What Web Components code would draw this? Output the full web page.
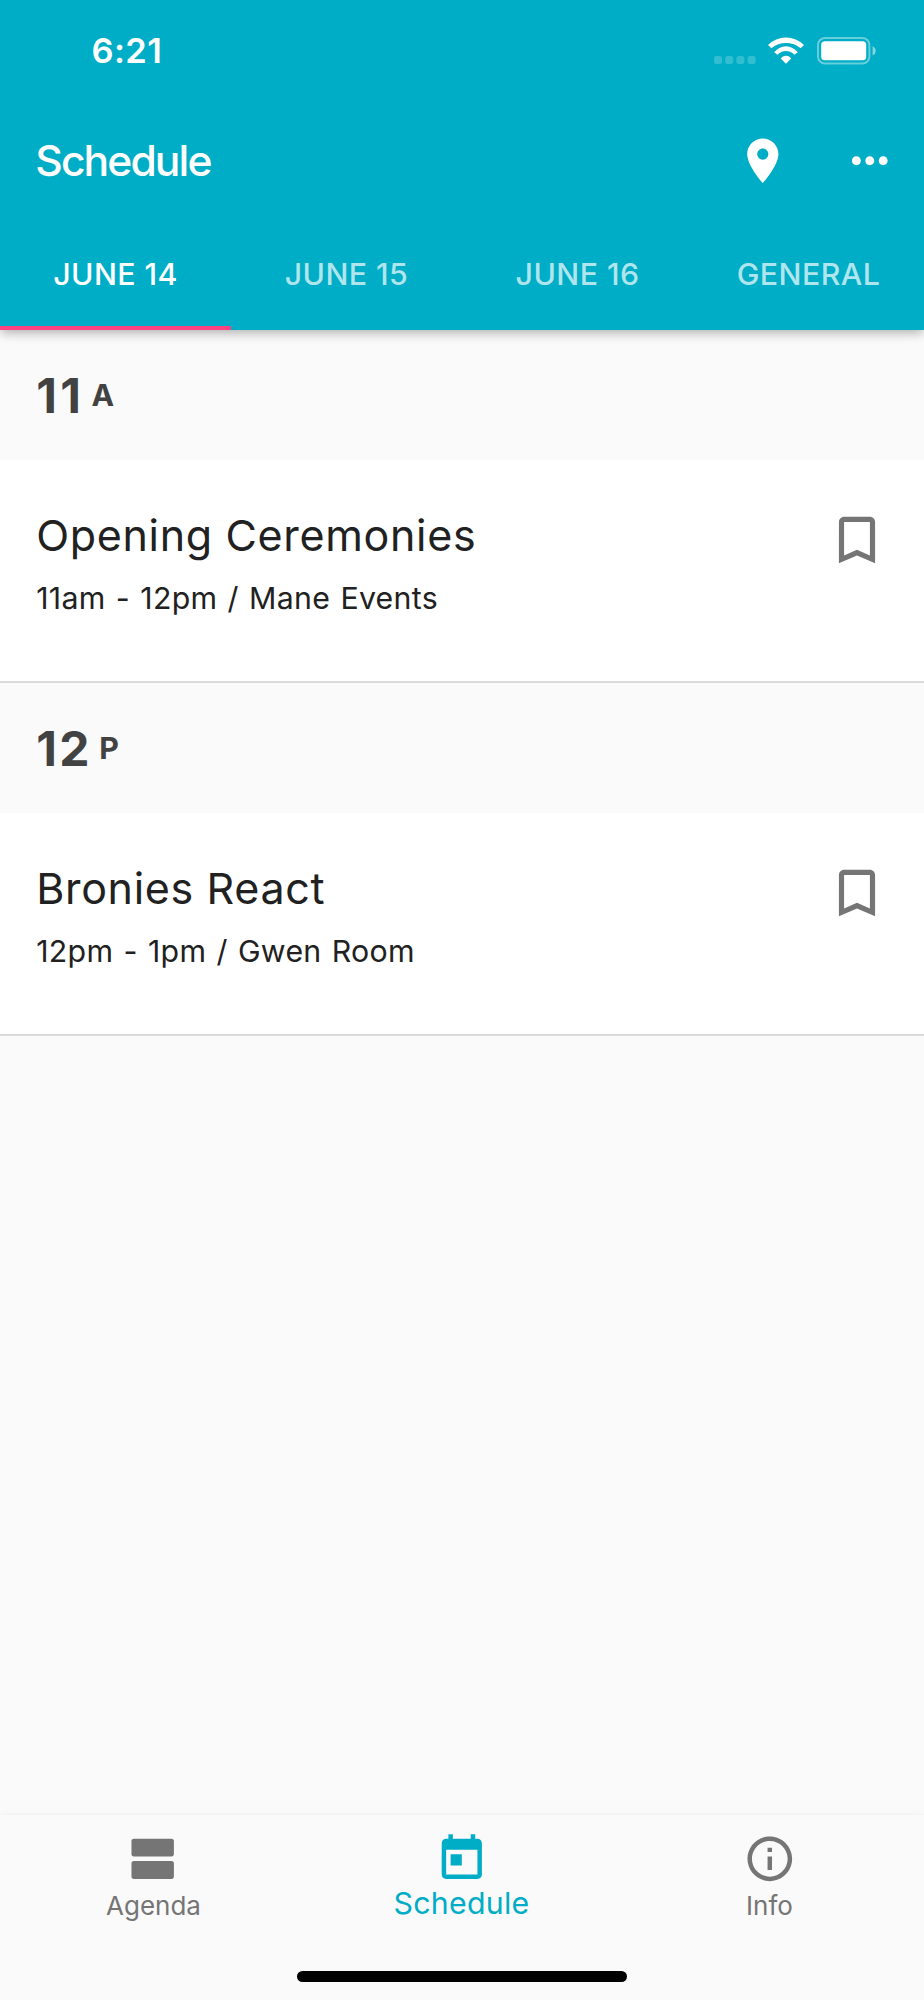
<!DOCTYPE html>
<html lang="en">
<head>
<meta charset="utf-8">
<title>Schedule</title>
<style>
  :root {
    --primary: #00adc6;
    --accent: #ff4081;
    --surface: #fafafa;
    --ink: #212121;
    --muted: #757575;
  }
  body {
    margin: 0;
    background: var(--surface);
    color: var(--ink);
    font-family: Inter, Roboto, "Liberation Sans", sans-serif;
  }
</style>
</head>
<body>

<schedule-app>
  <app-header slot="header" heading="Schedule" time="6:21">
    <day-tab selected>JUNE 14</day-tab>
    <day-tab>JUNE 15</day-tab>
    <day-tab>JUNE 16</day-tab>
    <day-tab>GENERAL</day-tab>
  </app-header>

  <hour-group hour="11" period="A" style="--hour-spacing: 3.2px">
    <event-tile>
      Opening Ceremonies
      <span slot="details">11am - 12pm / Mane Events</span>
    </event-tile>
  </hour-group>
  <hour-group hour="12" period="P" style="--hour-spacing: 2.3px">
    <event-tile>
      Bronies React
      <span slot="details">12pm - 1pm / Gwen Room</span>
    </event-tile>
  </hour-group>

  <bottom-nav slot="footer">
    <nav-item icon="agenda">Agenda</nav-item>
    <nav-item icon="today" selected>Schedule</nav-item>
    <nav-item icon="info">Info</nav-item>
  </bottom-nav>
</schedule-app>

<script>
// Material glyphs, all on a 24 unit grid.
const ICONS = {
  place: 'M12 2C8.13 2 5 5.13 5 9c0 5.25 7 13 7 13s7-7.75 7-13c0-3.87-3.13-7-7-7zm0 9.5c-1.38 0-2.5-1.12-2.5-2.5s1.12-2.5 2.5-2.5 2.5 1.12 2.5 2.5-1.12 2.5-2.5 2.5z',
  more: 'M6 10c-1.1 0-2 .9-2 2s.9 2 2 2 2-.9 2-2-.9-2-2-2zm12 0c-1.1 0-2 .9-2 2s.9 2 2 2 2-.9 2-2-.9-2-2-2zm-6 0c-1.1 0-2 .9-2 2s.9 2 2 2 2-.9 2-2-.9-2-2-2z',
  bookmark: 'M17 3H7c-1.1 0-1.99.9-1.99 2L5 21l7-3 7 3V5c0-1.1-.9-2-2-2zm0 15l-5-2.18L7 18V5h10v13z',
  agenda: 'M20 13H3c-.55 0-1 .45-1 1v6c0 .55.45 1 1 1h17c.55 0 1-.45 1-1v-6c0-.55-.45-1-1-1zm0-10H3c-.55 0-1 .45-1 1v6c0 .55.45 1 1 1h17c.55 0 1-.45 1-1V4c0-.55-.45-1-1-1z',
  today: 'M19 3h-1V1h-2v2H8V1H6v2H5c-1.11 0-1.99.9-1.99 2L3 19c0 1.1.89 2 2 2h14c1.1 0 2-.9 2-2V5c0-1.1-.9-2-2-2zm0 16H5V8h14v11zM7 10h5v5H7z',
  info: 'M11 17h2v-6h-2v6zm1-15C6.48 2 2 6.48 2 12s4.48 10 10 10 10-4.48 10-10S17.52 2 12 2zm0 18c-4.41 0-8-3.59-8-8s3.59-8 8-8 8 3.59 8 8-3.59 8-8 8zM11 9h2V7h-2v2z',
};

class MdIcon extends HTMLElement {
  static get observedAttributes() { return ['name']; }
  constructor() {
    super();
    const r = this.attachShadow({ mode: 'open' });
    r.innerHTML = `
      <style>
        :host { display: block; flex: none; width: var(--icon-size, 53.6px); height: var(--icon-size, 53.6px); }
        svg { display: block; width: 100%; height: 100%; fill: currentColor; }
      </style>
      <svg viewBox="0 0 24 24" aria-hidden="true"><path/></svg>
    `;
    this._pathEl = r.querySelector('path');
  }
  attributeChangedCallback() {
    this._pathEl.setAttribute('d', ICONS[this.getAttribute('name')] || '');
  }
}

class StatusBar extends HTMLElement {
  constructor() {
    super();
    this.attachShadow({ mode: 'open' });
  }
  connectedCallback() {
    this.shadowRoot.innerHTML = `
      <style>
        :host {
          display: flex; align-items: center; justify-content: space-between;
          box-sizing: border-box; height: 98px; padding: 3px 47.5px 0 91.5px;
        }
        .time { font-size: 34.5px; font-weight: 600; line-height: 42px; letter-spacing: .4px; }
        .indicators { display: flex; align-items: center; }
        svg { display: block; fill: #fff; }
        .signal { margin: 18px 12px 0 0; opacity: .2; }
        .wifi { margin-right: 13px; }
      </style>
      <span class="time"></span>
      <div class="indicators">
        <svg class="signal" width="42" height="8" viewBox="0 0 42 8">
          <rect width="8" height="8" rx="2.8"/><rect x="11.2" width="8" height="8" rx="2.8"/>
          <rect x="22.4" width="8" height="8" rx="2.8"/><rect x="33.6" width="8" height="8" rx="2.8"/>
        </svg>
        <svg class="wifi" width="36" height="27" viewBox="0 0 36 27">
          <path d="M0 8A25.2 25.2 0 0 1 36 8L32.7 11.3A23 23 0 0 0 3.3 11.3Z"/>
          <path d="M6.2 15.3A14.6 14.6 0 0 1 29.8 15.3L26.5 17.8A11.4 11.4 0 0 0 9.5 17.8Z"/>
          <path d="M12.7 21.6A6.3 6.3 0 0 1 23.3 21.6L18.6 26.2Q18 26.7 17.4 26.2Z"/>
        </svg>
        <svg width="60" height="28" viewBox="0 0 60 28">
          <rect x="1" y="1" width="51.4" height="25.6" rx="7" fill="none" stroke="#fff" stroke-width="2" opacity=".4"/>
          <rect x="4.2" y="4.3" width="45" height="19" rx="3.6"/>
          <path d="M55.6 9.2C59.8 10.8 59.8 16.9 55.6 18.5Z" opacity=".5"/>
        </svg>
      </div>
    `;
    this.shadowRoot.querySelector('.time').textContent = this.getAttribute('time') || '';
  }
}

class AppHeader extends HTMLElement {
  constructor() {
    super();
    this.attachShadow({ mode: 'open' });
  }
  connectedCallback() {
    this.shadowRoot.innerHTML = `
      <style>
        :host {
          display: block; position: relative;
          background: var(--primary); color: #fff;
          box-shadow: 0 4px 9px -2px rgba(0,0,0,.18), 0 6px 9px rgba(0,0,0,.07), 0 2px 15px rgba(0,0,0,.07);
        }
        .bar {
          display: flex; align-items: center;
          box-sizing: border-box; height: 125px; padding: 0 27.3px 0 35.3px;
        }
        h1 { flex: 1; margin: 1px 0 0; font-size: 42.6px; font-weight: 550; line-height: 50px; letter-spacing: -1.9px; }
        .more { margin-left: 53.6px; }
        nav { display: grid; grid-template-columns: repeat(4, 1fr); height: 107.3px; }
      </style>
      <status-bar time="${this.getAttribute('time')}"></status-bar>
      <div class="bar">
        <h1></h1>
        <md-icon name="place"></md-icon>
        <md-icon class="more" name="more"></md-icon>
      </div>
      <nav><slot></slot></nav>
    `;
    this.shadowRoot.querySelector('h1').textContent = this.getAttribute('heading') || '';
  }
}

class DayTab extends HTMLElement {
  constructor() {
    super();
    this.attachShadow({ mode: 'open' }).innerHTML = `
      <style>
        :host {
          display: flex; align-items: center; justify-content: center;
          border-bottom: 4.4px solid transparent;
          color: rgba(255,255,255,.7);
          font-size: 30.3px; font-weight: 500; line-height: 37px; letter-spacing: .45px;
        }
        :host([selected]) { color: #fff; border-bottom-color: var(--accent); }
      </style>
      <slot></slot>
    `;
  }
}

class HourGroup extends HTMLElement {
  constructor() {
    super();
    this.attachShadow({ mode: 'open' });
  }
  connectedCallback() {
    this.shadowRoot.innerHTML = `
      <style>
        :host { display: block; }
        header {
          display: flex; align-items: center; gap: 7.3px;
          height: 129.5px; padding-left: 36.3px;
          color: #424242;
        }
        .hour { font-size: 48px; font-weight: 700; line-height: 58px; letter-spacing: var(--hour-spacing, 0); padding-top: 1px; }
        .period { font-size: 30.3px; font-weight: 700; line-height: 37px; }
      </style>
      <header><span class="hour"></span><span class="period"></span></header>
      <slot></slot>
    `;
    this.shadowRoot.querySelector('.hour').textContent = this.getAttribute('hour');
    this.shadowRoot.querySelector('.period').textContent = this.getAttribute('period');
  }
}

class EventTile extends HTMLElement {
  constructor() {
    super();
    this.attachShadow({ mode: 'open' }).innerHTML = `
      <style>
        :host {
          display: flex; justify-content: space-between;
          box-sizing: border-box; height: 223.5px; padding: 49px 36px 0 36.2px;
          background: #fff; border-bottom: 2px solid #dadada;
        }
        .text { margin-top: -1px; }
        .title { font-size: 43px; line-height: 54px; letter-spacing: .67px; }
        .details { margin-top: 16px; font-size: 30.3px; line-height: 40px; letter-spacing: .3px; word-spacing: 1.4px; }
        md-icon { --icon-size: 62px; color: var(--muted); }
      </style>
      <div class="text">
        <div class="title"><slot></slot></div>
        <div class="details"><slot name="details"></slot></div>
      </div>
      <md-icon name="bookmark"></md-icon>
    `;
  }
}

class BottomNav extends HTMLElement {
  constructor() {
    super();
    this.attachShadow({ mode: 'open' }).innerHTML = `
      <style>
        :host {
          display: flex; flex-direction: column; justify-content: space-between; align-items: center;
          box-sizing: border-box; height: 185.5px; padding-bottom: 18px;
          background: var(--surface);
          box-shadow: 0 -1px 3px rgba(0,0,0,.035), 0 -4px 12px rgba(0,0,0,.012);
        }
        .items { display: grid; grid-template-columns: repeat(3, 1fr); width: 100%; }
        .home { width: 330px; height: 11px; border-radius: 6px; background: #000; }
      </style>
      <div class="items"><slot></slot></div>
      <div class="home"></div>
    `;
  }
}

class NavItem extends HTMLElement {
  constructor() {
    super();
    this.attachShadow({ mode: 'open' });
  }
  connectedCallback() {
    this.shadowRoot.innerHTML = `
      <style>
        :host {
          display: flex; flex-direction: column; align-items: center;
          padding-top: 17.1px; color: var(--muted);
          font-size: 26px; line-height: 40px; letter-spacing: 0;
        }
        .label { margin: 1px 1px 0 0; }
        :host([selected]) { color: var(--primary); font-size: 30.3px; letter-spacing: .26px; }
        :host([selected]) .label { margin-top: -2px; }
      </style>
      <md-icon name="${this.getAttribute('icon')}"></md-icon>
      <span class="label"><slot></slot></span>
    `;
  }
}

class ScheduleApp extends HTMLElement {
  constructor() {
    super();
    this.attachShadow({ mode: 'open' }).innerHTML = `
      <style>
        :host { display: flex; flex-direction: column; height: 2000px; }
        main { flex: 1; }
        slot[name="header"]::slotted(*) { z-index: 1; }
      </style>
      <slot name="header"></slot>
      <main><slot></slot></main>
      <slot name="footer"></slot>
    `;
  }
}

customElements.define('md-icon', MdIcon);
customElements.define('status-bar', StatusBar);
customElements.define('app-header', AppHeader);
customElements.define('day-tab', DayTab);
customElements.define('hour-group', HourGroup);
customElements.define('event-tile', EventTile);
customElements.define('bottom-nav', BottomNav);
customElements.define('nav-item', NavItem);
customElements.define('schedule-app', ScheduleApp);
</script>
</body>
</html>
